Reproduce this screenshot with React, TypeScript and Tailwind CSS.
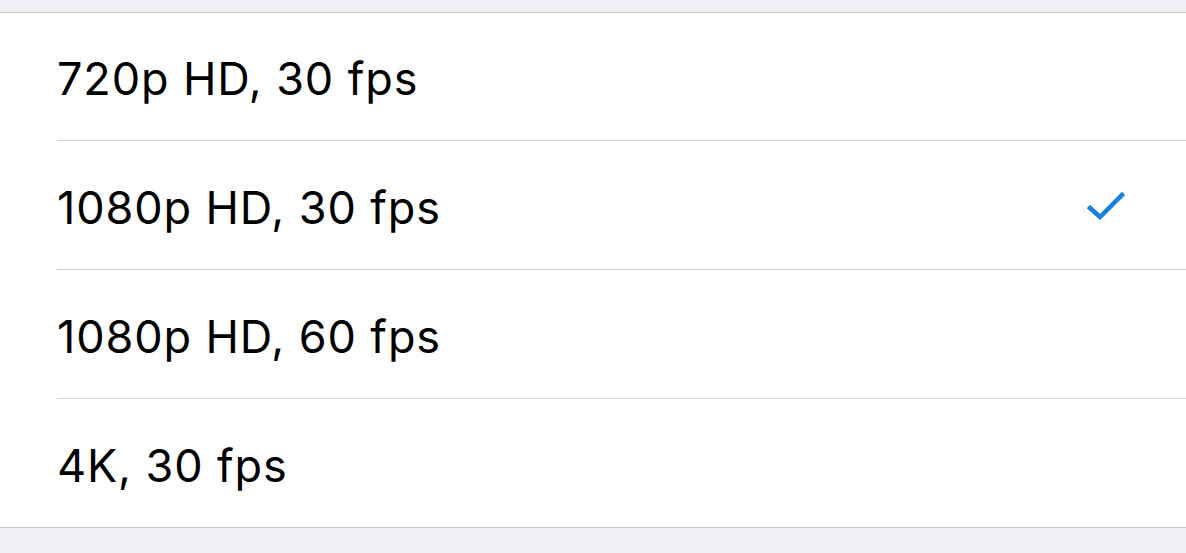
const options = [
  { label: '720p HD, 30 fps', selected: false, h: 'h-[128px]' },
  { label: '1080p HD, 30 fps', selected: true, h: 'h-[129px]' },
  { label: '1080p HD, 60 fps', selected: false, h: 'h-[129px]' },
  { label: '4K, 30 fps', selected: false, h: 'h-[128px]' },
]

function Check() {
  return (
    <svg width="40" height="30" viewBox="0 0 40 30" fill="none">
      <path d="M4 18 L14 27 L36 5" stroke="#1a7fe3" strokeWidth="4.5" strokeLinecap="square" />
    </svg>
  )
}

export default function App() {
  return (
    <div className="w-[1186px] h-[553px] bg-[#efeff4] overflow-hidden font-['Inter',sans-serif]">
      <div className="h-[12px]" />
      <div className="bg-white border-y border-[#c8c7cc]">
        {options.map((o, i) => (
          <div key={o.label} className="pl-[57px]">
            <div
              className={`${o.h} flex items-center pr-[60px] ${i < options.length - 1 ? 'border-b border-[#d1d1d6]' : ''}`}
            >
              <span className="flex-1 pt-[4px] text-[45px] leading-none text-black tracking-[0.9px]">{o.label}</span>
              {o.selected && <Check />}
            </div>
          </div>
        ))}
      </div>
    </div>
  )
}
